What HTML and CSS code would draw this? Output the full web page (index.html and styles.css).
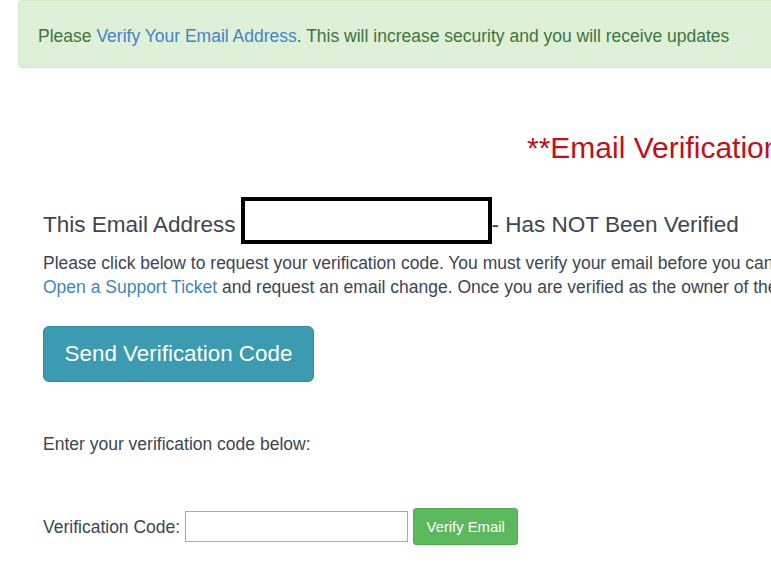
FILE: index.html
```html
<!DOCTYPE html>
<html lang="en">
<head>
<meta charset="utf-8">
<title>Email Verification</title>
<link rel="stylesheet" href="styles.css">
</head>
<body>
<div class="page">
  <div class="alert">Please <a href="#" class="link">Verify Your Email Address</a>. This will increase security and you will receive updates</div>
  <div class="content">
    <h2 class="title">**Email Verification Required**</h2>
    <div class="status">
      <span class="status-text">This Email Address</span>
      <span class="redacted"></span>
      <span class="status-text">- Has NOT Been Verified</span>
    </div>
    <p class="info">Please click below to request your verification code. You must verify your email before you can access all features.<br><a href="#" class="link">Open a Support Ticket</a> and request an email change. Once you are verified as the owner of the email address, your account will be activated.</p>
    <button class="btn-send" type="button">Send Verification Code</button>
    <p class="enter">Enter your verification code below:</p>
    <form class="code-row">
      <label class="code-label" for="code">Verification Code:</label>
      <input class="code-input" id="code" type="text">
      <button class="btn-verify" type="button">Verify Email</button>
    </form>
  </div>
</div>
</body>
</html>
```

FILE: styles.css
```css
html, body {
  margin: 0;
  padding: 0;
  overflow: hidden;
  background: #ffffff;
}
body {
  font-family: "Liberation Sans", Arial, sans-serif;
  color: #3b4651;
}
.page {
  width: 1300px;
  padding-left: 18px;
}
.alert {
  box-sizing: border-box;
  height: 68px;
  padding: 24px 20px 20px 19px;
  background: #dff0d8;
  border: 1px solid #d3e7c8;
  border-radius: 4px;
  color: #3c763d;
  font-size: 17.5px;
  line-height: 22px;
  white-space: nowrap;
}
.link {
  color: #4185c4;
  text-decoration: none;
}
.content {
  padding-left: 25px;
}
.title {
  margin: 62px 0 0;
  padding-left: 484px;
  font-size: 30px;
  line-height: 36px;
  font-weight: normal;
  color: #c40f17;
  white-space: nowrap;
}
.status {
  margin-top: 31px;
  display: flex;
  align-items: center;
  font-size: 22.5px;
  white-space: nowrap;
}
.status-text {
  padding-top: 8px;
  line-height: 26px;
}
.redacted {
  box-sizing: border-box;
  width: 251px;
  height: 47px;
  margin-left: 5px;
  border: 4px solid #000;
  background: #fff;
}
.info {
  margin: 7px 0 0;
  font-size: 17.5px;
  line-height: 24px;
  white-space: nowrap;
}
.btn-send {
  margin-top: 27px;
  box-sizing: border-box;
  width: 271px;
  height: 56px;
  background: #3a9bb1;
  border: 1px solid #2f8aa0;
  border-radius: 6px;
  color: #fff;
  font-family: "Liberation Sans", Arial, sans-serif;
  font-size: 22.4px;
  padding: 0;
}
.enter {
  margin: 50px 0 0;
  font-size: 17.5px;
  line-height: 24px;
}
.code-row {
  margin-top: 52px;
  display: flex;
  align-items: center;
}
.code-label {
  font-size: 17.5px;
  line-height: 24px;
  margin-right: 5px;
}
.code-input {
  box-sizing: border-box;
  width: 223px;
  height: 31px;
  margin: 0 5px 0 0;
  border: 1px solid #a9a9a9;
  padding: 2px 4px;
}
.btn-verify {
  box-sizing: border-box;
  width: 105px;
  height: 37px;
  background: #5cb85c;
  border: 1px solid #4cae4c;
  border-radius: 3px;
  color: #fff;
  font-family: "Liberation Sans", Arial, sans-serif;
  font-size: 14.8px;
  padding: 0;
}
```
